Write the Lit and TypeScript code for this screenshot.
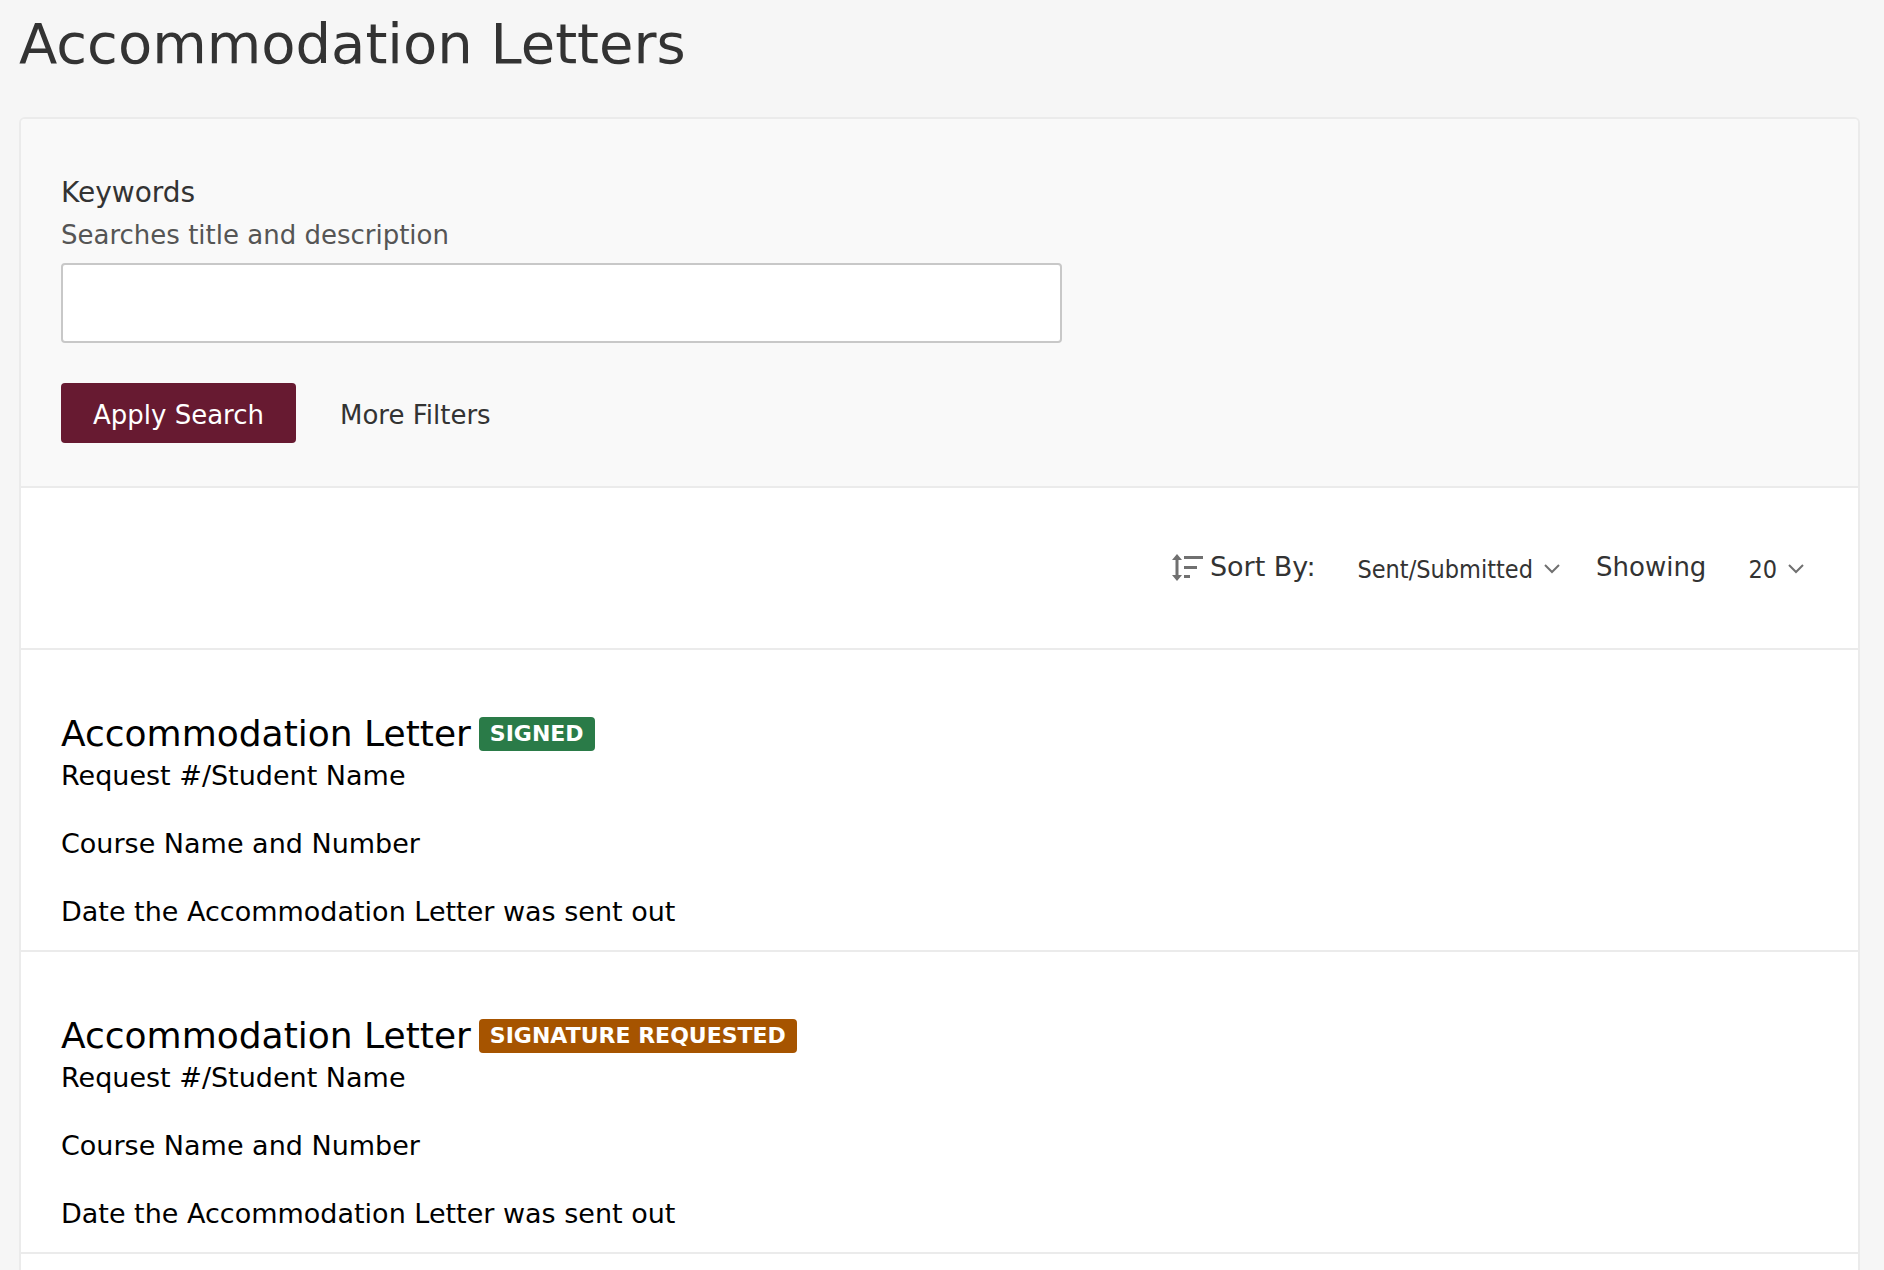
import { LitElement, html, css, svg } from "lit";
import { customElement, property } from "lit/decorators.js";

type Status = "signed" | "requested";

interface Letter {
  status: Status;
  label: string;
}

const letters: Letter[] = [
  { status: "signed", label: "SIGNED" },
  { status: "requested", label: "SIGNATURE REQUESTED" },
];

const chevron = svg`<path d="M1 2 L8 9 L15 2" fill="none" stroke="#707070" stroke-width="2"/>`;

@customElement("letter-item")
export class LetterItem extends LitElement {
  @property() status: Status = "signed";
  @property() label = "";

  static styles = css`
    :host {
      display: block;
      padding: 63px 40px 21px;
      border-bottom: 2px solid #ebebeb;
      color: #000;
    }
    .heading {
      display: flex;
      align-items: center;
      gap: 8px;
      margin: 0 0 4px;
      font-size: 36px;
      font-weight: 400;
      line-height: 42px;
    }
    .badge {
      padding: 0 11px;
      border-radius: 4px;
      color: #fff;
      font-size: 22px;
      font-weight: 700;
      line-height: 34px;
    }
    .signed {
      background: #2a7b48;
    }
    .requested {
      background: #a65400;
    }
    .line {
      margin: 0 0 34px;
      font-size: 27px;
      line-height: 34px;
    }
    .line:last-child {
      margin-bottom: 0;
    }
  `;

  render() {
    return html`
      <h2 class="heading">
        Accommodation Letter
        <span class="badge ${this.status}">${this.label}</span>
      </h2>
      <p class="line">Request #/Student Name</p>
      <p class="line">Course Name and Number</p>
      <p class="line">Date the Accommodation Letter was sent out</p>
    `;
  }
}

@customElement("app-root")
export class AppRoot extends LitElement {
  static styles = css`
    * {
      box-sizing: border-box;
    }
    :host {
      display: flex;
      flex-direction: column;
      box-sizing: border-box;
      height: 100vh;
      overflow: hidden;
      padding: 8px 24px 0 19px;
      background: #f6f6f6;
      color: #333;
      font-family: Verdana, "DejaVu Sans", sans-serif;
      font-size: 27px;
      line-height: 34px;
    }
    .title {
      flex: none;
      margin: 0 0 38px;
      font-size: 56px;
      font-weight: 400;
      line-height: 71px;
    }
    .card {
      flex: 1 0 auto;
      border: 2px solid #ebebeb;
      border-bottom: 0;
      border-radius: 6px 6px 0 0;
      background: #fff;
    }
    .search {
      display: flex;
      flex-direction: column;
      padding: 52px 40px 43px;
      border-bottom: 2px solid #ebebeb;
      border-radius: 4px 4px 0 0;
      background: #f9f9f9;
    }
    .label {
      font-size: 28px;
      line-height: 44px;
    }
    .hint {
      color: #555;
      font-size: 26px;
      line-height: 40px;
    }
    .keywords {
      width: 57%;
      height: 80px;
      margin: 8px 0 40px;
      padding: 0 20px;
      border: 2px solid #c8c8c8;
      border-radius: 4px;
      background: #fff;
      color: inherit;
      font: inherit;
    }
    .actions {
      display: flex;
      gap: 12px;
    }
    .button {
      padding: 4px 32px 0;
      border: 0;
      border-radius: 4px;
      background: none;
      color: #333;
      font: inherit;
      font-size: 26px;
      line-height: 56px;
    }
    .primary {
      background: #671a31;
      color: #fff;
    }
    .toolbar {
      display: flex;
      align-items: center;
      justify-content: flex-end;
      height: 162px;
      padding: 0 54px 2px;
      border-bottom: 2px solid #ebebeb;
    }
    .sort {
      display: flex;
      align-items: center;
      gap: 7px;
      margin-right: 42px;
    }
    .pick {
      display: flex;
      align-items: center;
      gap: 11px;
      padding-top: 6px;
    }
    .first {
      margin-right: 36px;
    }
    .showing {
      margin-right: 42px;
      font-size: 26px;
    }
    .select {
      appearance: none;
      field-sizing: content;
      padding: 0;
      border: 0;
      background: none;
      color: #333;
      font-family: Tahoma, "DejaVu Sans Condensed", "Noto Sans", sans-serif;
      font-size: 25px;
      line-height: 34px;
    }
    .icon {
      flex: none;
    }
  `;

  render() {
    return html`
      <h1 class="title">Accommodation Letters</h1>
      <main class="card">
        <form class="search" @submit=${(e: Event) => e.preventDefault()}>
          <label class="label" for="keywords">Keywords</label>
          <span class="hint" id="hint">Searches title and description</span>
          <input class="keywords" id="keywords" type="text" aria-describedby="hint" />
          <div class="actions">
            <button class="button primary" type="submit">Apply Search</button>
            <button class="button" type="button">More Filters</button>
          </div>
        </form>
        <div class="toolbar">
          <label class="sort" for="sort">
            <svg class="icon" width="31" height="27" viewBox="0 0 31 27" fill="#707070" aria-hidden="true">
              <path d="M5 0 L10 6 H6.5 V21 H10 L5 27 L0 21 H3.5 V6 H0 Z" />
              <path d="M12 2 H31 V5 H12 Z M12 12 H25 V15 H12 Z M12 21 H18 V24 H12 Z" />
            </svg>
            Sort By:
          </label>
          <span class="pick first">
            <select class="select" id="sort">
              <option>Sent/Submitted</option>
            </select>
            <svg class="icon" width="16" height="15" viewBox="0 0 16 15" aria-hidden="true">${chevron}</svg>
          </span>
          <label class="showing" for="count">Showing</label>
          <span class="pick">
            <select class="select" id="count">
              <option>20</option>
            </select>
            <svg class="icon" width="16" height="15" viewBox="0 0 16 15" aria-hidden="true">${chevron}</svg>
          </span>
        </div>
        ${letters.map(
          (l) => html`<letter-item .status=${l.status} .label=${l.label}></letter-item>`,
        )}
      </main>
    `;
  }
}
